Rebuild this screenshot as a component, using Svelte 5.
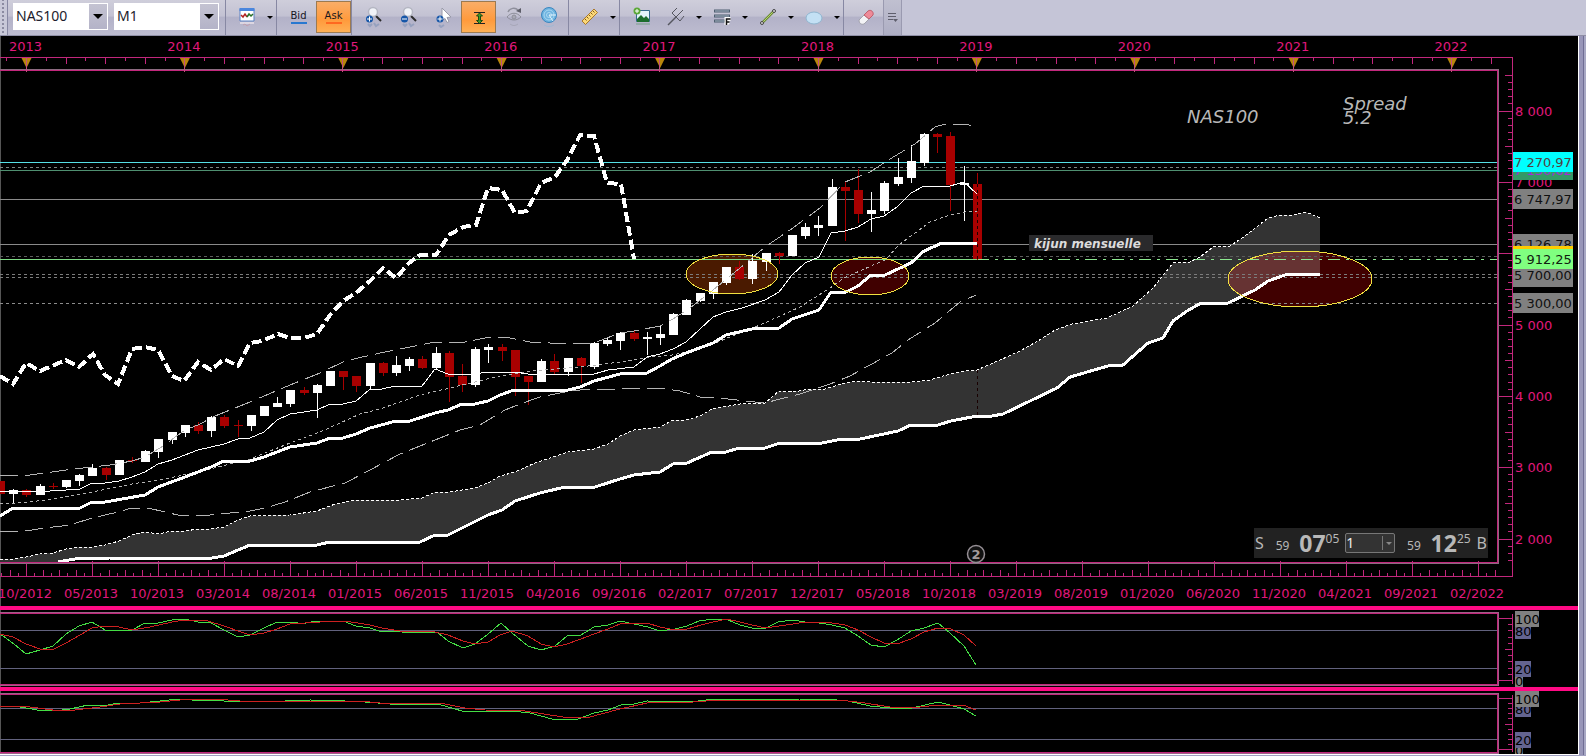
<script lang="ts">
  type Candle = [number, number, number, number, boolean?];

  const PINK = '#c2277c';
  const STEP = 13.2;

  let symbol = $state('NAS100');
  let period = $state('M1');
  let side = $state('ask');
  let centered = $state(true);
  let quantity = $state('1');

  const years = [2013, 2014, 2015, 2016, 2017, 2018, 2019, 2020, 2021, 2022];
  const yearX = (i: number) => 26.5 + i * 158.4;

  const dates = [
    '10/2012', '05/2013', '10/2013', '03/2014', '08/2014', '01/2015', '06/2015', '11/2015',
    '04/2016', '09/2016', '02/2017', '07/2017', '12/2017', '05/2018', '10/2018', '03/2019',
    '08/2019', '01/2020', '06/2020', '11/2020', '04/2021', '09/2021', '02/2022'
  ];

  const priceY = (p: number) => 681.2 - p * 0.07133;

  const topTicks = Array.from({ length: 76 }, (_, i) => i - 1)
    .filter((i) => i % 8 !== 0)
    .map((i) => `M${Math.round(26 + i * 19.8) + 0.5} 58v${i % 2 ? 3 : 6}`)
    .join('');

  const bottomTicks = Array.from({ length: 182 }, (_, i) => i - 3)
    .map((i) => {
      const len = i % 8 === 0 ? 15 : i % 2 ? 3 : 6;
      return `M${Math.round(26 + i * 8.25) + 0.5} 576v${-len}`;
    })
    .join('');

  const priceTicks = Array.from({ length: 69 }, (_, i) => 1700 + i * 100)
    .map((p) => {
      const len = p % 1000 === 0 ? 14 : p % 500 === 0 ? 7 : 4;
      return `M1512 ${Math.round(priceY(p)) + 0.5}h${-len}`;
    })
    .join('');

  function oscTicks(top: number, bottom: number) {
    return Array.from({ length: 11 }, (_, i) => {
      const len = i % 10 === 0 ? 14 : i === 5 ? 7 : 4;
      return `M1512 ${Math.round(top + ((bottom - top) * i) / 10) + 0.5}h${-len}`;
    }).join('');
  }

  // body top, body bottom, wick top, wick bottom, falling month
  const candles: Candle[] = [
    [481, 494, 481, 494, true], [490, 494, 489, 503], [490, 495, 489, 497, true], [486, 495, 484, 495],
    [486, 487, 483, 489, true], [480, 487, 480, 488], [475, 481, 474, 486], [468, 476, 464, 476],
    [468, 475, 467, 480, true], [460, 475, 460, 475], [460, 461, 457, 463, true], [451, 462, 450, 462],
    [439, 452, 439, 458], [432, 440, 432, 444], [425, 433, 425, 437], [425, 431, 422, 434, true],
    [417, 431, 416, 437], [417, 426, 415, 428, true], [425, 426, 420, 437, true], [415, 426, 415, 431],
    [406, 416, 406, 416], [403, 407, 397, 407], [390, 404, 390, 407], [390, 393, 387, 395, true],
    [385, 393, 384, 418], [371, 386, 371, 386], [371, 377, 371, 390, true], [376, 386, 376, 392, true],
    [363, 386, 363, 389], [363, 373, 362, 376, true], [365, 373, 356, 376], [359, 366, 357, 371],
    [359, 368, 356, 369, true], [353, 368, 347, 370], [353, 377, 351, 402, true], [376, 385, 364, 392, true],
    [349, 385, 347, 387], [347, 350, 344, 363], [347, 351, 344, 361, true], [350, 377, 350, 396, true],
    [376, 382, 376, 405, true], [361, 382, 359, 382], [361, 372, 354, 374, true], [358, 372, 358, 376],
    [358, 366, 357, 383, true], [343, 367, 342, 369], [340, 344, 337, 346], [333, 341, 332, 350],
    [333, 339, 330, 341, true], [337, 339, 332, 355], [334, 338, 325, 345], [314, 335, 313, 335],
    [300, 315, 299, 315], [293, 301, 293, 302], [282, 294, 282, 299], [267, 283, 267, 285],
    [267, 279, 261, 280, true], [261, 279, 254, 284], [253, 262, 253, 271], [253, 256, 252, 264, true],
    [235, 256, 235, 256], [227, 236, 223, 239], [225, 228, 216, 236], [187, 226, 179, 226],
    [187, 191, 182, 241, true], [190, 214, 169, 223, true], [210, 214, 192, 232], [183, 211, 181, 214],
    [177, 184, 158, 186], [161, 178, 145, 183], [134, 163, 133, 166], [134, 137, 133, 153, true],
    [136, 185, 132, 211, true], [183, 185, 166, 221], [184, 259, 173, 260, true]
  ];

  const tenkan =
    '0,491 50,491 66,490 80,489 92,483 105,483 119,481 132,477 145,472 158,464 172,460 185,455 198,450 211,447 224,444 238,439 250,438 264,432 277,420 290,414 304,412 317,410 330,404 343,404 356,401 369,390 382,389 395,386 422,386 435,369 448,374 475,374 488,372 515,372 528,374 594,374 608,370 634,367 647,357 660,354 673,349 686,342 700,329 713,317 726,312 742,308 765,300 779,292 792,275 805,263 819,257 831,233 845,231 858,227 871,219 884,216 897,207 911,193 924,186 950,186 964,182 977,194';
  const kijun =
    '0,516 13,508 80,508 92,502 105,502 145,495 158,487 185,477 211,467 224,461 250,461 264,457 290,447 317,443 330,438 343,438 356,434 370,428 396,421 410,421 435,413 448,410 462,404 475,404 488,401 500,395 514,390 568,390 580,387 594,381 620,374 634,373 647,373 660,366 672,359 686,353 713,343 726,335 752,329 779,328 792,319 819,310 831,292 846,292 858,286 871,275 885,275 911,263 924,251 942,243 977,243';
  const bandMid =
    '0,504 30,502 60,498 92,492 132,484 170,478 210,469 250,459 290,443 320,432 360,414 380,409 420,395 450,388 500,376 530,371 580,367 620,362 650,357 672,355 700,349 740,333 760,325 800,307 830,288 844,278 871,266 885,260 900,244 930,222 950,215 965,212 977,211';
  const bandTop =
    '0,476 30,475 66,470 92,467 110,465 132,461 145,457 160,448 185,430 198,425 215,416 250,402 290,385 320,373 345,361 380,353 400,349 435,342 460,343 490,337 510,338 530,342 550,343 594,343 620,333 634,331 660,326 673,319 690,308 713,290 740,268 765,247 790,230 820,208 845,182 870,172 890,159 915,144 935,127 945,124 962,124 976,126';
  const bandLow =
    '0,531 25,531 45,528 70,525 92,518 118,512 132,508 148,508 165,512 182,516 210,515 250,511 265,508 285,502 310,492 345,483 370,470 400,454 430,442 460,430 480,425 505,410 520,404 540,397 570,391 590,389 610,390 630,388 660,388 680,391 700,397 720,398 745,401 765,403 780,399 800,394 830,384 850,376 870,365 892,353 908,340 935,323 960,302 976,295';
  const spanA =
    '0,559 13,559 26,557 40,554 53,553 66,549 79,547 92,547 105,545 119,541 132,535 145,532 158,534 172,531 185,531 198,529 211,529 224,527 238,520 250,516 290,515 317,511 335,504 356,500 400,500 422,498 435,492 450,492 475,488 490,482 500,476 515,472 535,463 568,452 594,449 608,444 620,436 634,430 660,427 673,420 686,420 700,416 712,409 740,404 765,403 779,391 793,392 810,389 825,389 845,383 860,381 870,382 912,382 930,380 950,374 965,371 977,370 1000,360 1020,351 1038,341 1055,330 1072,324 1107,318 1133,306 1153,288 1173,263 1190,262 1200,257 1213,247 1230,246 1245,236 1268,218 1280,215 1294,215 1306,212 1320,218';
  const spanB =
    '58,562 75,559 110,558 212,558 224,556 250,545 317,545 330,542 420,542 435,535 448,535 462,528 488,515 502,510 515,501 540,493 565,487 595,487 620,479 634,475 660,472 673,464 687,463 712,452 726,452 739,448 765,448 780,443 822,443 842,439 860,439 898,431 911,425 938,425 951,421 977,416 992,416 1003,414 1030,401 1057,388 1070,377 1108,366 1123,365 1148,343 1163,338 1173,321 1187,311 1201,303 1228,303 1255,290 1268,281 1285,275 1300,274 1320,274';
  const chikou =
    '0,376 13,384 26,363 40,371 66,360 79,367 93,354 105,375 118,384 132,349 145,347 158,350 172,376 184,381 198,362 211,370 224,359 238,366 250,343 262,341 278,334 290,338 304,338 317,334 330,315 343,301 356,293 370,281 383,268 396,278 409,263 420,255 436,255 449,235 463,227 476,225 488,188 502,190 515,213 527,211 541,183 555,177 568,159 580,135 594,136 607,183 621,184 634,259';

  const cloud = `${spanA} ${spanB.split(' ').reverse().join(' ')} 0,562`;

  const levels = [
    { y: 162, color: '#55e0e6' },
    { y: 167, color: '#7b8480', dash: '3 3' },
    { y: 170, color: '#4f8f70' },
    { y: 199, color: '#8a8a8a' },
    { y: 244, color: '#8a8a8a' },
    { y: 256, color: '#5c5c5c', dash: '3 3' },
    { y: 274, color: '#7c7c7c', dash: '3 3' },
    { y: 277, color: '#7c7c7c', dash: '3 3' },
    { y: 303, color: '#8c8c8c', dash: '3 3' }
  ];

  const zones = [
    { cx: 732, cy: 274, rx: 46, ry: 20, fill: '#4a1a00' },
    { cx: 870, cy: 276, rx: 39, ry: 19, fill: '#400000' },
    { cx: 1300, cy: 279, rx: 72, ry: 28, fill: '#400000' }
  ];

  const tags = [
    { text: '6 126,78', y: 234, bg: '#808080', fg: '#101010' },
    { text: '', y: 246, bg: '#ffcc00', fg: '#000' },
    { text: '5 700,00', y: 267, bg: '#808080', fg: '#101010', dy: -2 },
    { text: '5 912,25', y: 249, bg: '#80ff80', fg: '#102010' },
    { text: '6 747,97', y: 189, bg: '#808080', fg: '#101010' },
    { text: '5 300,00', y: 293, bg: '#808080', fg: '#101010' },
    { text: '7 150,62', y: 160, bg: '#339966', fg: '#a030d8' },
    { text: '7 270,97', y: 152, bg: '#00ffff', fg: '#504040' }
  ];

  const panels = [
    {
      top: 610, height: 77, frameTop: 612, frameBottom: 684, y100: 618, y80: 630, y20: 668, y0: 680,
      fast: '0,634 3,636 14,644 26,654 40,650 53,646 66,634 79,626 92,622 105,630 132,630 145,623 158,623 172,620 185,619 198,622 211,623 224,630 238,637 250,635 264,628 277,622 294,622 302,624 315,621 343,621 356,626 370,628 382,632 395,631 409,633 437,632 448,641 463,648 475,644 488,634 501,623 512,633 528,646 541,650 555,646 567,636 581,635 594,627 608,625 620,621 634,624 648,627 660,631 675,629 687,626 699,621 713,619 728,620 740,625 752,628 766,628 778,622 793,620 805,622 819,623 832,625 845,628 858,636 871,645 884,647 897,640 911,631 924,628 938,623 950,633 964,646 976,665',
      slow: '0,634 13,637 26,644 40,649 52,650 66,643 80,635 92,628 105,626 119,627 132,630 150,627 172,622 185,620 208,621 224,626 238,631 250,635 264,633 277,629 290,624 305,623 320,622 345,621 370,625 382,628 400,631 435,632 448,635 463,641 475,644 488,642 500,635 512,631 528,636 541,644 554,647 567,644 581,639 594,634 608,629 620,624 634,623 647,623 660,627 675,630 687,629 701,625 713,622 727,619 740,622 752,625 766,628 779,626 793,624 805,622 832,623 845,625 858,630 871,637 884,643 897,644 911,639 924,632 938,628 951,629 964,635 976,646'
    },
    {
      top: 691, height: 63, frameTop: 693, frameBottom: 752, y100: 698, y80: 708, y20: 739, y0: 749,
      fast: '0,706 15,706 37,710 55,711 70,709 88,705 108,705 118,703 140,703 160,701 178,699 192,700 215,700 232,702 262,701 285,701 310,700 345,701 365,702 390,704 438,704 462,711 512,711 530,713 552,719 565,720 578,719 594,713 608,710 621,705 634,704 647,701 690,702 706,700 727,699 760,700 800,699 825,699 848,701 870,706 890,708 912,708 925,705 938,702 950,705 964,709 976,716',
      slow: '0,706 30,707 60,711 75,710 100,707 120,704 160,702 190,699 215,699 240,701 265,702 290,701 360,701 380,703 440,703 465,708 485,710 525,711 550,715 570,718 590,717 620,709 647,703 660,702 693,702 720,700 780,700 840,700 865,703 890,707 920,707 938,705 963,705 976,710'
    }
  ];
</script>

{#snippet caret()}
  <svg class="caret" viewBox="0 0 6 3" width="6" height="3" aria-hidden="true"><path d="M0 0h6L3 3z" /></svg>
{/snippet}

<main class="window">
  <header class="toolbar" aria-label="Chart tools">
    <span class="grip"></span>
    <div class="group group--pickers">
      <div class="picker">
        <select aria-label="Symbol" bind:value={symbol}><option>NAS100</option></select>
        <span class="picker__arrow"><svg viewBox="0 0 10 5" width="10" height="5"><path d="M0 0h10L5 5z" /></svg></span>
      </div>
      <div class="picker picker--period">
        <select aria-label="Period" bind:value={period}><option>M1</option></select>
        <span class="picker__arrow"><svg viewBox="0 0 10 5" width="10" height="5"><path d="M0 0h10L5 5z" /></svg></span>
      </div>
    </div>

    <div class="group">
      <button class="tool tool--split" type="button" aria-label="Indicators">
        <svg viewBox="0 0 20 20" width="20" height="20">
          <path d="M3 2h14v12H3z" fill="#fff" stroke="#5c83c4" />
          <path d="M2.500 1h15v3h-15z" fill="#4a86dd" />
          <path d="M4 8l2 2 2-3 2 3" fill="none" stroke="#b22222" stroke-width="1.500" />
          <path d="M10 10l2-3 2 2 2-2" fill="none" stroke="#287028" stroke-width="1.500" />
          <path d="M3 16h14" fill="none" stroke="#e6dfe6" stroke-width="2" opacity=".8" />
          <path d="M6 18l2-1 2 2 3-2" fill="none" stroke="#c58f9b" opacity=".6" />
        </svg>
        {@render caret()}
      </button>
    </div>

    <div class="group">
      <button class="tool quote" type="button" aria-pressed={side === 'bid'} onclick={() => (side = 'bid')}>Bid</button>
      <button class="tool quote quote--ask" type="button" aria-pressed={side === 'ask'} onclick={() => (side = 'ask')}>Ask</button>
    </div>

    <div class="group group--view">
      {#each ['M3 13h5M5.500 10.500v5', 'M3 13h5'] as sign, i}
        <button class="tool" type="button" aria-label={i ? 'Zoom out' : 'Zoom in'}>
          <svg viewBox="0 0 20 22" width="20" height="22">
            <path d="M11 9l6 6" stroke="#2b2b2b" stroke-width="2" />
            <circle cx="9" cy="6" r="4.500" fill="#f1f3f8" stroke="#b4b6c2" stroke-width="1.500" />
            <circle cx="5.500" cy="13" r="3.500" fill="#1656a8" />
            <path d={sign} stroke="#fff" />
            <path d="M4 18l2 2 2-2M10 17l2 3 3-2" fill="none" stroke="#8193b5" stroke-width="2" opacity=".6" />
          </svg>
        </button>
      {/each}
      <button class="tool" type="button" aria-label="Zoom selection">
        <svg viewBox="0 0 20 22" width="20" height="22">
          <path d="M8 2l9 9-4 .5 2 4-2 1-2-4-3 2z" fill="#fff" stroke="#999aa8" />
          <circle cx="6" cy="13" r="3.500" fill="#1656a8" />
          <path d="M3.500 13h5M6 10.500v5" stroke="#fff" />
          <path d="M5 19l2 2 3-2" fill="none" stroke="#8193b5" stroke-width="2" opacity=".6" />
        </svg>
      </button>
      <button class="tool" type="button" aria-label="Auto scale" aria-pressed={centered} onclick={() => (centered = !centered)}>
        <svg viewBox="0 0 20 20" width="20" height="20">
          <path d="M5 5.500h11M5 16.500h11" stroke="#222" />
          <path d="M10.500 6L13.500 9h-2v4.500h2l-3 3-3-3h2V9h-2z" fill="#3f9a28" stroke="#1c4a10" />
        </svg>
      </button>
      <button class="tool" type="button" aria-label="Refresh view">
        <svg viewBox="0 0 20 22" width="20" height="22" fill="none" stroke="#8e8f9b">
          <path d="M4 6c2-4 7-5 10-2" stroke-width="1.500" /><path d="M12 5l5-3v5z" fill="#5c5d68" stroke="none" />
          <path d="M3 11c4-5 10-5 14 0-4 4-10 4-14 0z" /><circle cx="10" cy="11" r="2" fill="#a8a9b5" />
          <path d="M6 18c3 2 5 2 8 0" opacity=".4" />
        </svg>
      </button>
      <button class="tool" type="button" aria-label="Sync">
        <svg viewBox="0 0 20 22" width="20" height="22">
          <circle cx="10" cy="9" r="7.500" fill="#6fb4e0" stroke="#3a86bf" />
          <circle cx="10" cy="9" r="5" fill="none" stroke="#a9d8f2" />
          <circle cx="10" cy="9" r="2.500" fill="none" stroke="#a9d8f2" />
          <path d="M10 9h7M10 9l4 6" stroke="#e2f3fc" />
          <path d="M5 19c3 2 7 2 10 0" fill="none" stroke="#8fb9d8" opacity=".6" />
        </svg>
      </button>
    </div>

    <div class="group">
      <button class="tool tool--split" type="button" aria-label="Measure">
        <svg viewBox="0 0 20 20" width="20" height="20">
          <path d="M2 14L14 2l3.500 3.500L5.500 17.500z" fill="#fbd878" stroke="#a9782a" />
          <path d="M5 12l1.500 1.500M7 10l1.500 1.500M9 8l1.500 1.500M11 6l1.500 1.500M13 4l1.500 1.500" stroke="#7d5a1c" />
        </svg>
        {@render caret()}
      </button>
    </div>

    <div class="group">
      <button class="tool" type="button" aria-label="Add picture">
        <svg viewBox="0 0 20 20" width="20" height="20">
          <path d="M4.500 3.500h13v11h-13z" fill="#e4f3fa" stroke="#356a8a" />
          <path d="M5 12l4-4 3 3 2-2 3 3v3H5z" fill="#1c6d2c" />
          <circle cx="5" cy="4" r="3.500" fill="#5ca838" /><path d="M3 4h4M5 2v4" stroke="#fff" />
          <path d="M4 17h14" stroke="#7ba28c" stroke-width="2" opacity=".5" />
        </svg>
      </button>
      <button class="tool tool--split" type="button" aria-label="Pitchfork">
        <svg viewBox="0 0 20 20" width="20" height="20" fill="none" stroke="#55565f">
          <path d="M2 18l8-8" stroke-width="1.500" />
          <path d="M6 6l8 8M6 6l5-5M10 10l7-7M14 14l4-5" />
        </svg>
        {@render caret()}
      </button>
      <button class="tool tool--split" type="button" aria-label="Fibonacci">
        <svg viewBox="0 0 20 20" width="20" height="20">
          <path d="M2 4h16M2 9h16M2 14h11" stroke="#4f5f70" stroke-width="3" />
          <path d="M3 4h14M3 9h14M3 14h9" stroke="#a9b8c6" />
          <path d="M14.500 18v-6h4M14.500 15h3" fill="none" stroke="#fff" stroke-width="4" />
          <path d="M14.500 18v-6h4M14.500 15h3" fill="none" stroke="#111" stroke-width="1.500" />
        </svg>
        {@render caret()}
      </button>
      <button class="tool tool--split" type="button" aria-label="Trend line">
        <svg viewBox="0 0 20 20" width="20" height="20">
          <path d="M4 16L16 4" stroke="#6b8c34" stroke-width="2.500" /><path d="M4 16L16 4" stroke="#b5d070" />
          <circle cx="4" cy="16" r="1.500" fill="#ddd" stroke="#444" /><circle cx="16" cy="4" r="1.500" fill="#ddd" stroke="#444" />
        </svg>
        {@render caret()}
      </button>
      <button class="tool tool--split" type="button" aria-label="Ellipse">
        <svg viewBox="0 0 20 20" width="20" height="20">
          <ellipse cx="10" cy="11" rx="8" ry="6" fill="#c3e0f4" stroke="#90b6d0" />
        </svg>
        {@render caret()}
      </button>
    </div>

    <div class="group group--last">
      <button class="tool" type="button" aria-label="Erase">
        <svg viewBox="0 0 20 20" width="20" height="20">
          <path d="M3 13l5-5 5 4-5 5c-3 1-5-1-5-4z" fill="#f3f3f6" stroke="#a3a3ad" />
          <path d="M8 8l4-4c3-2 6 1 5 4l-4 4z" fill="#ee8a98" stroke="#c0606e" />
        </svg>
      </button>
    </div>
    <button class="overflow" type="button" aria-label="More tools">
      <svg viewBox="0 0 10 10" width="10" height="10" fill="none" stroke="#5e5e6c">
        <path d="M0 1.500h8M0 4.500h8M0 7.500h5" /><path d="M5 7h5L7.500 10z" fill="#5e5e6c" stroke="none" />
      </svg>
    </button>
  </header>

  <div class="body">
    <section class="charts" aria-label="NAS100 monthly">
      <div class="price">
        <svg class="chart" viewBox="0 36 1578 570" role="img" aria-label="Price">
          <defs>
            <clipPath id="plot"><path d="M0 71h1497v491H0z" /></clipPath>
          </defs>

          <g class="lines">
            <path d={`M0 57.500H1512.500V576.500H0${topTicks}${bottomTicks}${priceTicks}`} stroke={PINK} />
            <path d="M0 69.500H1498.500V563.500H0" stroke="#8c6a80" />
            <path d="M0 70.500H1497.500V562.500H0" stroke={PINK} />
          </g>

          {#each years as year, i}
            <path d={`M${yearX(i) - 5} 58h10l-5 10z`} fill="#b8860b" />
            <path d={`M${Math.round(yearX(i)) - 0.5} 58v14`} class="lines" stroke="#c2507c" />
            <text class="axis" x={yearX(i) - 1} y="51" text-anchor="middle">{year}</text>
          {/each}
          {#each dates as date, i}
            <text class="axis" x={25 + i * 66} y="598" text-anchor="middle">{date}</text>
          {/each}
          {#each [8, 7, 5, 4, 3, 2] as k}
            <text class="axis" x="1515" y={Math.round(priceY(k * 1000)) + 5}>{k} 000</text>
          {/each}

          <g clip-path="url(#plot)" class="lines">
            <polygon points={cloud} fill="#333" />
            {#each zones as { fill, ...shape }}
              <ellipse class="zone" {...shape} {fill} />
            {/each}
            {#each levels as level}
              <path d={`M0 ${level.y}.500H1497`} stroke={level.color} stroke-dasharray={level.dash} />
            {/each}
            <path d="M0 259.500H977" stroke="#7fdc86" />
            <path d="M977 259.500H1497" stroke="#8ce890" stroke-dasharray="12 6 3 6" />

            {#each candles as [top, bottom, high, low, down], i}
              {@const x = Math.round(i * STEP)}
              <path d={`M${x} ${high}h1v${low - high}h-1z`} fill={down ? '#a80000' : '#fff'} />
              <path d={`M${x - 4} ${top}h9v${bottom - top}h-9z`} fill={down ? '#a80000' : '#fff'} />
            {/each}
            <path d="M977.500 184v75M977.500 370v46" stroke="#180000" stroke-dasharray="3 3" />

            <polyline points={spanA} stroke="#fff" stroke-dasharray="3 2" />
            <polyline points={spanB} stroke="#fff" stroke-width="3" />
            <polyline points={bandTop} stroke="#b4b4b4" stroke-dasharray="18 7" />
            <polyline points={bandLow} stroke="#b4b4b4" stroke-dasharray="18 7" />
            <polyline points={bandMid} stroke="#b4b4b4" stroke-dasharray="3 3" />
            <polyline points={tenkan} stroke="#fff" />
            <polyline points={kijun} stroke="#fff" stroke-width="3" />
            <polyline points={chikou} stroke="#fff" stroke-width="4" stroke-dasharray="10 4" />

            {#each zones as { fill, ...shape }}
              <ellipse class="ring" {...shape} />
            {/each}
          </g>

          <path d="M1029 235h124v16h-124z" fill="#2a2a2c" />
          <text class="note" x="1034" y="248">kijun mensuelle</text>
          <text class="spread" x="1187" y="123">NAS100</text>
          <text class="spread" x="1343" y="110">Spread</text>
          <text class="spread" x="1343" y="124">5.2</text>

          <circle cx="976" cy="554" r="8.500" fill="#111" stroke="#958e94" stroke-width="1.500" />
          <text class="marker" x="976" y="559" text-anchor="middle">2</text>

          {#each tags as tag}
            <path d={`M1513 ${tag.y}h60v20h-60z`} fill={tag.bg} />
            <text class="tag" x="1514" y={tag.y + 15 + (tag.dy ?? 0)} fill={tag.fg}>{tag.text}</text>
          {/each}
        </svg>

        <form class="ticket" onsubmit={(e) => e.preventDefault()}>
          <button type="button" class="ticket__side" aria-label="Sell">S</button>
          <span class="ticket__small">59</span>
          <span class="ticket__big">07<sup>05</sup></span>
          <span class="ticket__qty">
            <select aria-label="Quantity" bind:value={quantity}><option>1</option></select>
            <i>{@render caret()}</i>
          </span>
          <span class="ticket__small">59</span>
          <span class="ticket__big">12<sup>25</sup></span>
          <button type="button" class="ticket__side" aria-label="Buy">B</button>
        </form>
      </div>

      {#each panels as p}
        <div class="splitter"></div>
        <svg class="chart" viewBox={`0 ${p.top} 1578 ${p.height}`} role="img" aria-label="Stochastic">
          <g class="lines">
            <path d={`M0 ${p.frameTop}.500H1498.500V${p.frameBottom + 1}.500H0`} stroke="#a06088" />
            <path d={`M0 ${p.frameTop + 1}.500H1497.500V${p.frameBottom}.500H0`} stroke={PINK} />
            <path d={`M1512.500 ${p.frameTop + 2}V${p.frameBottom}${oscTicks(p.y100, p.y0)}`} stroke={PINK} />
            <path d={`M0 ${p.y80}.500H1497M0 ${p.y20}.500H1497`} stroke="#62627e" />
            <polyline points={p.fast} stroke="#44dd44" />
            <polyline points={p.slow} stroke="#cc2020" />
          </g>
          <path d={`M1515 ${p.y0 - 3}h8v12h-8z`} fill="#808080" />
          <text class="tag" x="1515" y={p.y0 + 6}>0</text>
          <path d={`M1515 ${p.y20 - 7}h16v16h-16zM1515 ${p.y80 - 7}h16v16h-16z`} fill="#646490" />
          <text class="tag" x="1515" y={p.y20 + 6}>20</text>
          <text class="tag" x="1515" y={p.y80 + 6}>80</text>
          <path d={`M1515 ${p.y100 - 7}h24v16h-24z`} fill="#808080" />
          <text class="tag" x="1515" y={p.y100 + 6}>100</text>
        </svg>
      {/each}
    </section>
    <div class="edge"></div>
  </div>
</main>

<style>
  :global(body) {
    margin: 0;
    background: #000;
  }

  .window {
    display: flex;
    flex-direction: column;
    overflow: hidden;
    font-family: 'Noto Sans', 'Open Sans', sans-serif;
    border-bottom: 1px solid #a0a0c0;
  }

  .toolbar {
    display: flex;
    height: 36px;
    box-sizing: border-box;
    background: #c5c5d7;
    border-bottom: 1px solid #8f8fa6;
  }

  .grip {
    width: 7px;
    background: radial-gradient(circle, #8a8aa0 1px, transparent 1px) 0 2px / 6px 4px repeat-y, #c8c8d8;
  }

  .group {
    display: flex;
    align-items: flex-start;
    padding: 1px 0 0 4px;
    border-left: 1px solid #8788a3;
    background: linear-gradient(#cfcedb, #c3c2d3 45%, #b3b2c8 50%, #bdbcd0);
  }

  .group--pickers {
    gap: 6px;
    padding: 3px 6px 0 5px;
  }

  .group--view {
    padding-right: 2px;
  }

  .picker {
    display: flex;
    position: relative;
    width: 95px;
    height: 27px;
    box-sizing: border-box;
    background: #fff;
    border: 1px solid #fff;
  }

  .picker--period {
    width: 105px;
  }

  .picker select {
    appearance: none;
    width: 100%;
    border: 0;
    padding: 0 20px 2px 2px;
    background: none;
    color: #1c1c2c;
    font: 14px 'Noto Sans', sans-serif;
  }

  .picker__arrow {
    position: absolute;
    top: 0;
    right: 0;
    bottom: 0;
    display: grid;
    place-items: center;
    width: 18px;
    background: linear-gradient(#c4c3d2, #b4b3c8);
    pointer-events: none;
  }

  .tool {
    display: flex;
    align-items: center;
    justify-content: center;
    width: 35px;
    height: 32px;
    box-sizing: border-box;
    padding: 0;
    border: 1px solid transparent;
    background: none;
  }

  .tool[aria-pressed='true'] {
    background: linear-gradient(#f9ad68, #ff9a3c 60%, #ffb055);
    border-color: #9c7a50;
  }

  .tool--split {
    width: 46px;
    gap: 10px;
    padding-left: 4px;
  }

  .quote {
    flex-direction: column;
    gap: 1px;
    color: #16161e;
    font: 10px 'DejaVu Sans', sans-serif;
  }

  .quote::after {
    content: '';
    width: 16px;
    height: 2px;
    background: #2878d0;
  }

  .quote--ask::after {
    background: #ff6820;
  }

  .overflow {
    width: 19px;
    padding: 0;
    border: 0;
    border-left: 1px solid #9a9ab0;
    border-right: 1px solid #9a9ab0;
    background: linear-gradient(#c0c0d0, #aeaec4);
  }

  .body {
    display: flex;
  }

  .charts {
    flex: 1;
    min-width: 0;
    background: #000;
    border-bottom: 1px solid #fff;
  }

  .edge {
    width: 7px;
    background: linear-gradient(90deg, #9896b8 4px, #706e94 4px 5px, #a8a8c4 5px);
    border-left: 1px solid #fff;
  }

  .price {
    position: relative;
  }

  .chart {
    display: block;
    width: 100%;
    height: auto;
    box-shadow: inset 1px 0 #555;
  }

  .lines {
    fill: none;
    shape-rendering: crispEdges;
  }

  .zone {
    mix-blend-mode: screen;
  }

  .ring {
    fill: none;
    stroke: #f0e040;
  }

  .axis,
  .tag {
    font: 13px 'DejaVu Sans', Verdana, sans-serif;
  }

  .axis {
    fill: #e0187c;
  }

  .note {
    fill: #dcdcdc;
    font: italic bold 12px 'DejaVu Sans', sans-serif;
  }

  .spread {
    fill: #b8b8b8;
    font: italic 18px 'DejaVu Sans', sans-serif;
  }

  .marker {
    fill: #a39a9a;
    font: bold 13px 'DejaVu Sans', sans-serif;
  }

  .splitter {
    height: 4px;
    background: #ff0a84;
  }

  .ticket {
    position: absolute;
    right: 90px;
    bottom: 48px;
    display: flex;
    align-items: center;
    justify-content: space-between;
    width: 234px;
    height: 30px;
    box-sizing: border-box;
    padding: 0 1px;
    background: #222;
    color: #b8b8b8;
  }

  .ticket__side {
    padding: 0;
    border: 0;
    background: none;
    color: inherit;
    font: 16px 'Noto Sans', sans-serif;
  }

  .ticket__small {
    padding: 5px 0 0 6px;
    font-size: 12px;
  }

  .ticket__big {
    display: flex;
    padding-left: 4px;
    font-size: 23px;
    font-weight: 700;
    line-height: 28px;
  }

  .ticket__big sup {
    font-size: 12px;
    font-weight: 400;
    line-height: 20px;
  }

  .ticket__qty {
    display: flex;
    align-items: center;
    width: 50px;
    height: 20px;
    box-sizing: border-box;
    border: 1px solid #777;
    border-radius: 2px;
    background: #333;
  }

  .ticket__qty select {
    appearance: none;
    flex: 1;
    min-width: 0;
    padding: 0;
    border: 0;
    border-right: 1px solid #777;
    background: none;
    color: #eee;
    font: 14px/14px 'Noto Sans', sans-serif;
  }

  .ticket__qty i {
    display: grid;
    place-items: center;
    width: 11px;
    fill: #888;
  }
</style>
